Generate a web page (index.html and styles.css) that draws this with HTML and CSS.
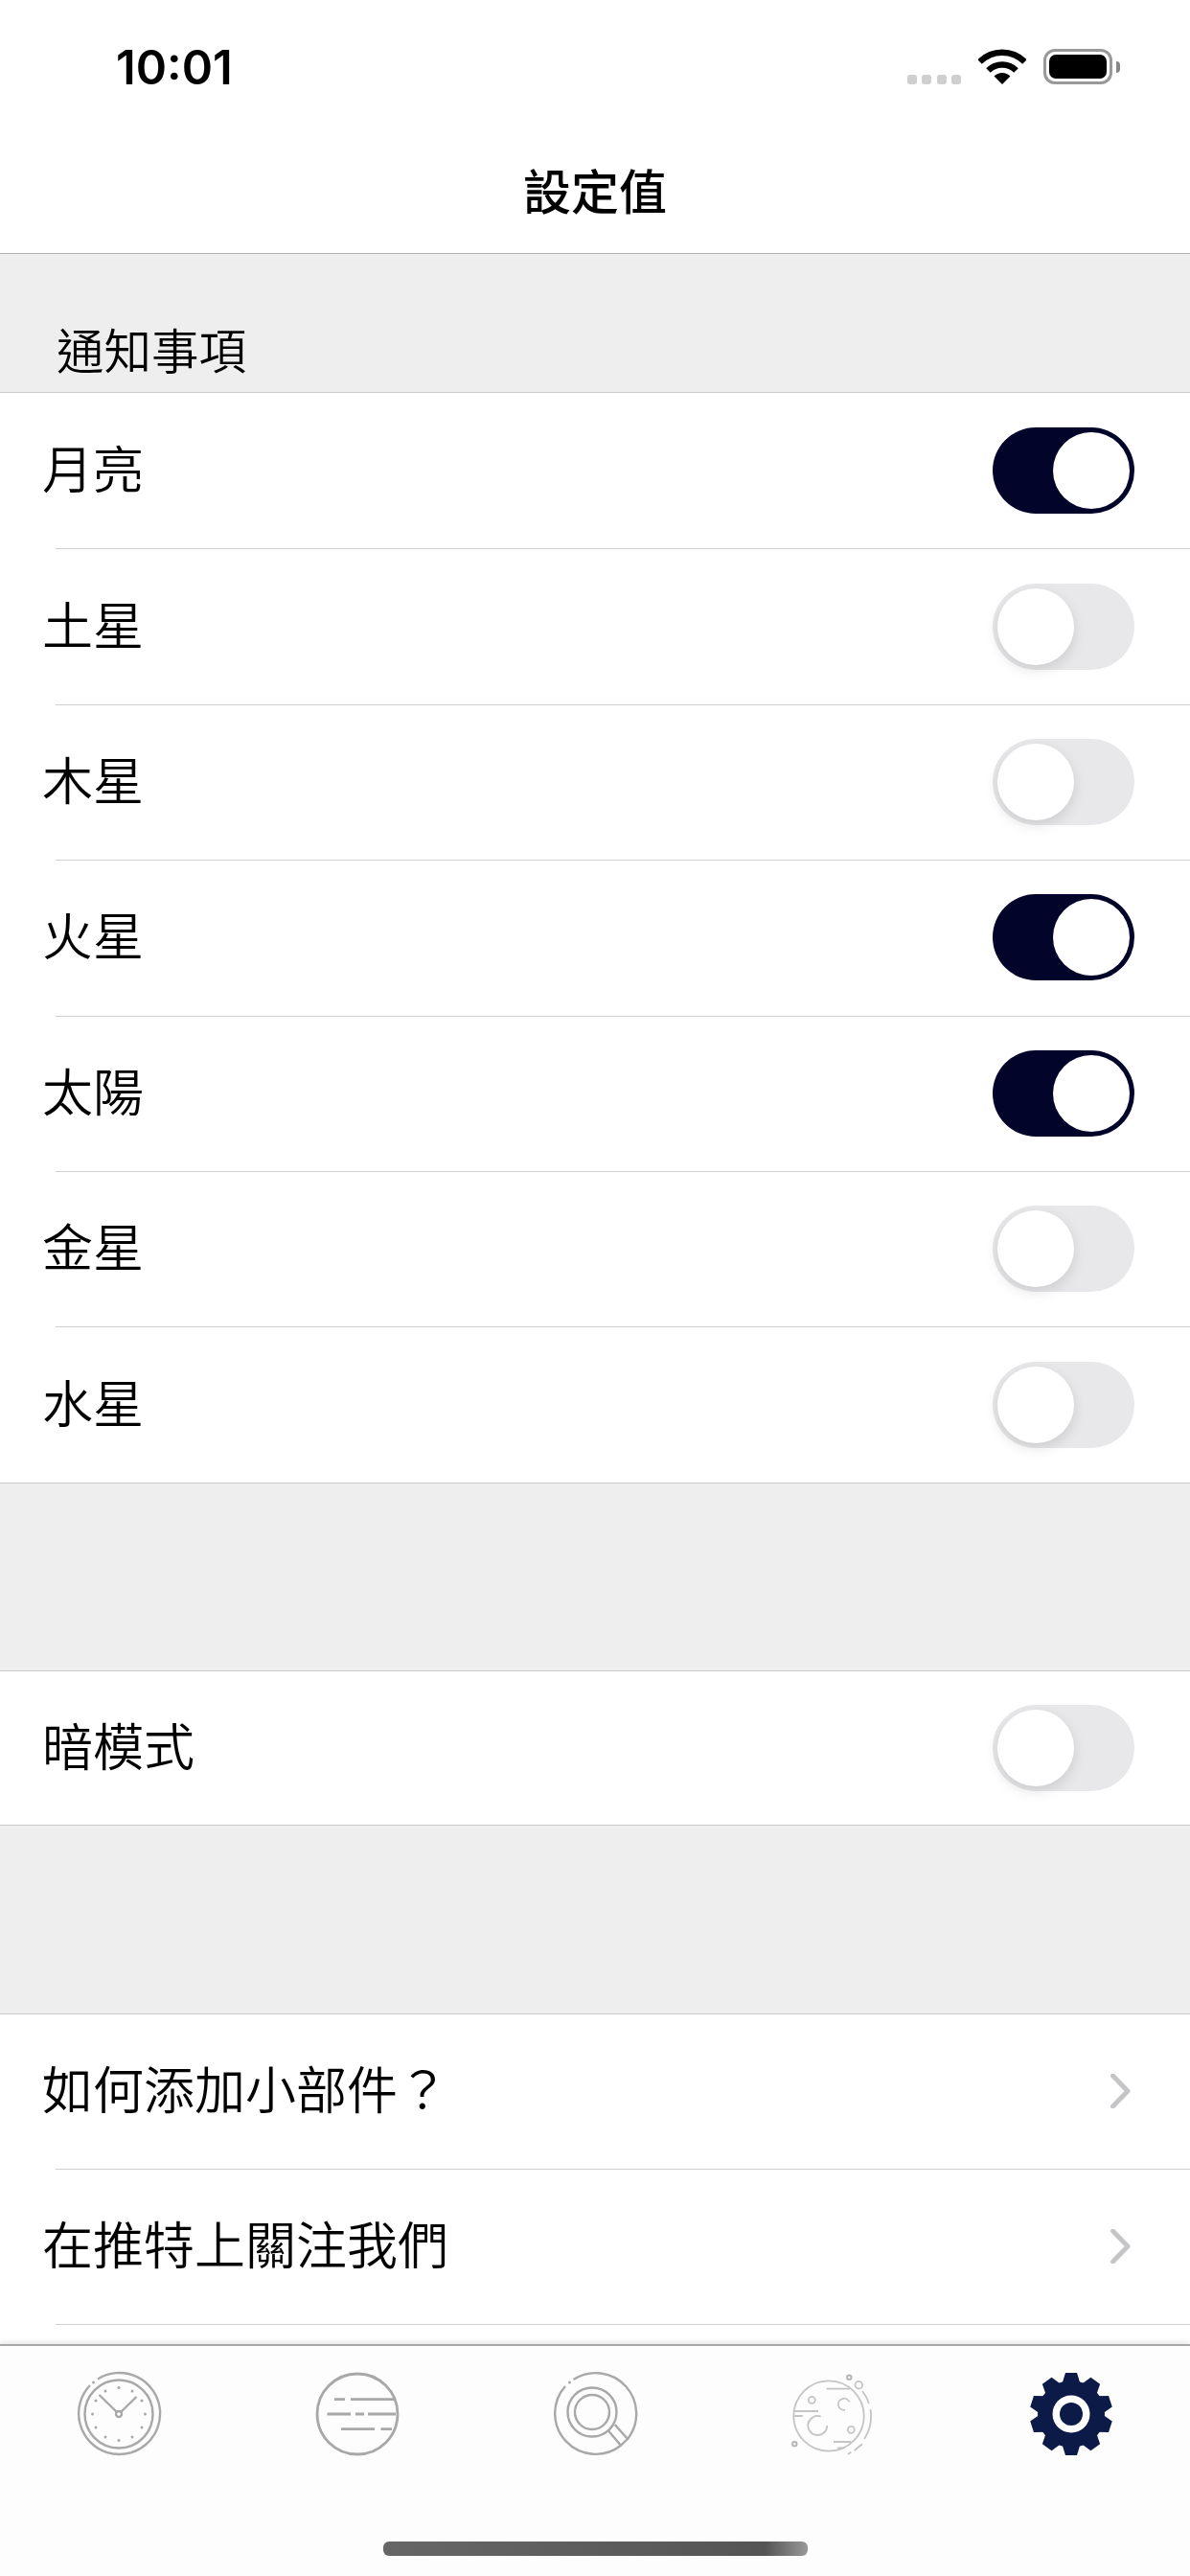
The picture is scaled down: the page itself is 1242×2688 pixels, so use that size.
FILE: index.html
```html
<!DOCTYPE html>
<html lang="zh-Hant">
<head>
  <meta charset="UTF-8">
  <title>設定值</title>
  <meta name="viewport" content="width=device-width, initial-scale=1">
  <link rel="stylesheet" href="styles.css">
</head>
<body>
  <div class="app">
    <div class="status-bar">
      <span class="time">10:01</span>
      <div class="status-icons">
        <div class="signal"><i></i><i></i><i></i><i></i></div>
        <svg class="wifi" width="50" height="38" viewBox="-25 -38 50 38">
          <path d="M-23.5 -23.5A33 33 0 0 1 23.5 -23.5" />
          <path d="M-14.5 -14.5A20.5 20.5 0 0 1 14.5 -14.5" />
          <path class="wedge" d="M0 0L-8.5 -8.5A12 12 0 0 1 8.5 -8.5Z" />
        </svg>
        <div class="battery"><div class="battery-fill"></div></div>
        <div class="battery-nub"></div>
      </div>
    </div>

    <div class="nav-bar">設定值</div>

    <div class="list">
      <div class="section-title">通知事項</div>
      <div class="group">
        <div class="row"><span>月亮</span><div class="switch on"></div></div>
        <div class="row"><span>土星</span><div class="switch"></div></div>
        <div class="row"><span>木星</span><div class="switch"></div></div>
        <div class="row"><span>火星</span><div class="switch on"></div></div>
        <div class="row"><span>太陽</span><div class="switch on"></div></div>
        <div class="row"><span>金星</span><div class="switch"></div></div>
        <div class="row"><span>水星</span><div class="switch"></div></div>
      </div>

      <div class="spacer"></div>
      <div class="group">
        <div class="row single"><span>暗模式</span><div class="switch"></div></div>
      </div>

      <div class="spacer"></div>
      <div class="group links">
        <div class="row"><span>如何添加小部件？</span>
          <svg class="chevron" width="24" height="36" viewBox="0 0 24 36"><path d="M4.5 2L20 18L4.5 34" /></svg>
        </div>
        <div class="row"><span>在推特上關注我們</span>
          <svg class="chevron" width="24" height="36" viewBox="0 0 24 36"><path d="M4.5 2L20 18L4.5 34" /></svg>
        </div>
        <div class="row"></div>
      </div>
    </div>

    <div class="tab-bar">
      <!-- clock -->
      <svg class="tab-icon" width="92" height="92" viewBox="-46 -46 92 92">
        <path d="M-22 -36.5A42.5 42.5 0 1 1 -30 -30" />
        <circle class="dot" cx="-26.5" cy="-33" r="1.5" />
        <circle r="35.5" />
        <circle class="dot" cx="0" cy="-27.5" r="1.5" />
        <circle class="dot" cx="14" cy="-24" r="1.5" />
        <circle class="dot" cx="24" cy="-14" r="1.5" />
        <circle class="dot" cx="27.5" cy="0" r="1.5" />
        <circle class="dot" cx="24" cy="14" r="1.5" />
        <circle class="dot" cx="14" cy="24" r="1.5" />
        <circle class="dot" cx="0" cy="27.5" r="1.5" />
        <circle class="dot" cx="-14" cy="24" r="1.5" />
        <circle class="dot" cx="-24" cy="14" r="1.5" />
        <circle class="dot" cx="-27.5" cy="0" r="1.5" />
        <circle class="dot" cx="-24" cy="-14" r="1.5" />
        <circle class="dot" cx="-14" cy="-24" r="1.5" />
        <path d="M-20.5 -20L-2.5 -2.5M18.5 -18L2.5 -2.5" />
        <circle r="3" />
      </svg>

      <!-- planet with bands -->
      <svg class="tab-icon bands" width="92" height="92" viewBox="-46 -46 92 92">
        <circle r="42" />
        <path d="M-24 -15.3H-13M-7 -15.3H38" />
        <path d="M-31.5 0H-7M-2 0H7M11 0H40" />
        <path d="M-17 15.7H18M24.5 15.7H36" />
      </svg>

      <!-- search -->
      <svg class="tab-icon" width="92" height="92" viewBox="-46 -46 92 92">
        <path d="M34 26A42.5 42.5 0 0 0 -22.5 -36" />
        <path d="M-31 -29A42.5 42.5 0 0 0 27 32.7" />
        <circle class="dot" cx="-26.5" cy="-33" r="1.5" />
        <circle cx="-3" cy="-2" r="25.5" />
        <circle cx="-3" cy="-2" r="18" />
        <path d="M14 17.5L27 32.7L34 26L20.7 11" />
      </svg>

      <!-- moon -->
      <svg class="tab-icon moon" width="100" height="92" viewBox="-46 -48 100 92">
        <circle r="36.7" />
        <circle cx="-17.7" cy="-16.7" r="3.5" />
        <circle cx="23.3" cy="14.3" r="3.5" />
        <path d="M21.5 -14.5A6 6 0 1 0 17 -6.3" />
        <path d="M-1.7 10A10 10 0 1 1 -8.3 0.6" />
        <path d="M-2.3 -28.3H21.7M-35.7 -5H-11M-35.7 0H-27.3M5 27H23.3M9.3 33.3H16.7" />
        <path d="M35 -26A44 44 0 0 1 42 -13M43.5 -7A44 44 0 0 1 37 24M35 29.3L26.7 36M23.3 37.7L20 40" />
        <circle cx="31.3" cy="-32.3" r="3.8" />
        <circle class="dot" cx="21.3" cy="-40.3" r="2.2" />
        <circle class="dot" cx="-35.7" cy="29.3" r="2.2" />
      </svg>

      <!-- settings gear -->
      <svg class="tab-icon gear" width="92" height="92" viewBox="-46 -46 92 92">
        <defs><path id="tooth" d="M-6 -43H6L10 -30H-10Z" /></defs>
        <circle r="35" />
        <use href="#tooth" />
        <use href="#tooth" transform="rotate(36)" />
        <use href="#tooth" transform="rotate(72)" />
        <use href="#tooth" transform="rotate(108)" />
        <use href="#tooth" transform="rotate(144)" />
        <use href="#tooth" transform="rotate(180)" />
        <use href="#tooth" transform="rotate(216)" />
        <use href="#tooth" transform="rotate(252)" />
        <use href="#tooth" transform="rotate(288)" />
        <use href="#tooth" transform="rotate(324)" />
        <circle class="hole" r="19.5" />
        <circle r="12" />
      </svg>
    </div>

    <div class="home-area"><div class="home-indicator"></div></div>
  </div>
</body>
</html>
```

FILE: styles.css
```css
* {
  box-sizing: border-box;
}
body {
  margin: 0;
  background: #fff;
  font-family: "Noto Sans CJK TC", "Noto Sans", sans-serif;
  color: #000;
}
.app {
  width: 1242px;
  height: 2688px;
  display: flex;
  flex-direction: column;
  overflow: hidden;
}

/* status bar */
.status-bar {
  height: 132px;
  flex: none;
  display: flex;
  justify-content: space-between;
  align-items: flex-start;
  padding: 41px 73px 0 121px;
}
.time {
  font-family: Inter, sans-serif;
  font-size: 49px;
  font-weight: 600;
  line-height: 60px;
  color: #000;
}
.status-icons {
  display: flex;
  align-items: flex-end;
  padding-top: 9px;
}
.signal {
  display: flex;
  gap: 5.5px;
  margin-right: 18px;
}
.signal i {
  width: 10px;
  height: 10px;
  border-radius: 3px;
  background: #cfcfcf;
}
.wifi {
  margin-right: 18px;
  display: block;
}
.wifi path {
  fill: none;
  stroke: #000;
  stroke-width: 6.5;
}
.wifi .wedge {
  fill: #000;
  stroke: none;
}
.battery {
  width: 72px;
  height: 37px;
  border: 3px solid #999;
  border-radius: 12px;
  padding: 3px;
}
.battery-fill {
  height: 100%;
  background: #000;
  border-radius: 7px;
}
.battery-nub {
  width: 4px;
  height: 12px;
  margin: 0 0 12px 4px;
  background: #888;
  border-radius: 0 6px 6px 0;
}

/* nav */
.nav-bar {
  height: 133px;
  flex: none;
  border-bottom: 1px solid #b2b2b2;
  display: flex;
  align-items: center;
  justify-content: center;
  padding-bottom: 3px;
  font-size: 50px;
  font-weight: 500;
}

/* list */
.list {
  flex: 1;
  min-height: 0;
  overflow: hidden;
  background: #eee;
}
.section-title {
  height: 144px;
  display: flex;
  align-items: flex-end;
  padding: 0 0 13px 59px;
  font-size: 49.5px;
  font-weight: 350;
  line-height: 64px;
}
.spacer {
  height: 195.5px;
}
.group {
  background: #fff;
  border-top: 1px solid #c9c9c9;
  border-bottom: 1px solid #c9c9c9;
}
.row {
  position: relative;
  height: 162.4px;
  display: flex;
  align-items: center;
  justify-content: space-between;
  padding: 0 58px 0 44px;
  font-size: 53px;
  font-weight: 350;
}
.row.single {
  height: 160px;
}
.links .row {
  height: 161.5px;
}
.row span {
  padding-bottom: 8px;
}
.row + .row::before {
  content: "";
  position: absolute;
  top: 0;
  left: 58px;
  right: 0;
  border-top: 1px solid #cfcfcf;
}

/* switches */
.switch {
  position: relative;
  width: 148px;
  height: 90px;
  border-radius: 45px;
  background: #e8e8ea;
}
.switch::after {
  content: "";
  position: absolute;
  top: 5px;
  left: 5px;
  width: 80px;
  height: 80px;
  border-radius: 50%;
  background: #fff;
  box-shadow: 0 5px 14px rgba(0, 0, 0, 0.12);
}
.switch.on {
  background: #02042a;
}
.switch.on::after {
  left: 63px;
  box-shadow: none;
}
.chevron {
  margin-right: 3px;
}
.chevron path {
  fill: none;
  stroke: #c5c5c8;
  stroke-width: 5;
  stroke-linecap: round;
  stroke-linejoin: round;
}

/* tab bar */
.tab-bar {
  height: 151px;
  flex: none;
  background: #fdfdfd;
  border-top: 2px solid #a8a8a8;
  box-shadow: 0 -3px 5px rgba(0, 0, 0, 0.08);
  position: relative;
  display: grid;
  grid-template-columns: repeat(5, 248.4px);
  justify-items: center;
  padding-top: 25px;
}
.tab-icon {
  display: block;
  fill: none;
  stroke: #a8a8a8;
  stroke-width: 2.4;
}
.tab-icon .dot {
  fill: #a8a8a8;
  stroke: none;
}
.bands {
  stroke-width: 2.8;
}
.moon {
  stroke: #c4c4c4;
  stroke-width: 1.8;
}
.moon .dot {
  fill: none;
  stroke: #b5b5b5;
  stroke-width: 2;
}
.gear {
  fill: #0b1a47;
  stroke: none;
}
.gear .hole {
  fill: #fff;
}
.home-area {
  height: 91px;
  flex: none;
  background: #fdfdfd;
  display: flex;
  justify-content: center;
  padding-top: 55px;
}
.home-indicator {
  width: 443px;
  height: 15px;
  border-radius: 6px;
  background: linear-gradient(to right, #666 0%, #555 90%, #999 100%);
}
```
